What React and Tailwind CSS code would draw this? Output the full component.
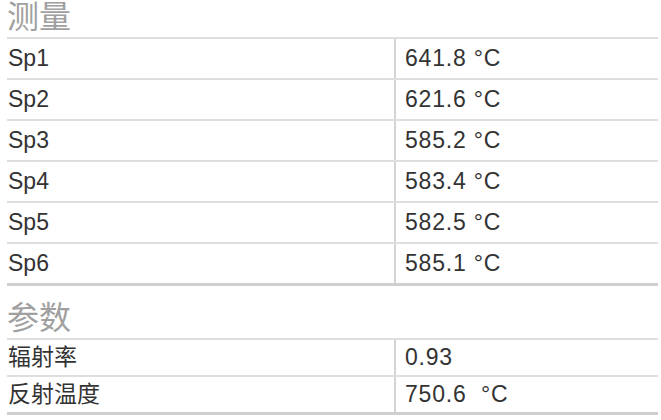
const measurements = [
  ["Sp1", "641.8 °C"],
  ["Sp2", "621.6 °C"],
  ["Sp3", "585.2 °C"],
  ["Sp4", "583.4 °C"],
  ["Sp5", "582.5 °C"],
  ["Sp6", "585.1 °C"],
]

const params = [
  ["辐射率", "0.93"],
  ["反射温度", "750.6\u00a0 °C"],
]

function Section({ title, rows, rowHeight }) {
  return (
    <div>
      <div className="h-[37px] text-[32px] leading-[35px] text-[#a0a0a0]">{title}</div>
      <div className="border-b-[3px] border-[#cfcfcf]">
        {rows.map(([label, value]) => (
          <div key={label} className={`flex border-t-2 border-[#dedede] ${rowHeight}`}>
            <div className="flex w-[389px] items-center border-r-2 border-[#d4d4d4] pl-px">{label}</div>
            <div className="flex flex-1 items-center pl-[9px] tracking-[0.8px]">{value}</div>
          </div>
        ))}
      </div>
    </div>
  )
}

export default function App() {
  return (
    <div
      className="h-[420px] w-[661px] overflow-hidden bg-white pl-[7px] pr-[3px] text-[23px] text-[#333333]"
      style={{ fontFamily: '"Liberation Sans", "Noto Sans CJK SC", sans-serif' }}
    >
      <Section title="测量" rows={measurements} rowHeight="h-[41px]" />
      <div className="mt-[15px]">
        <Section title="参数" rows={params} rowHeight="h-[37px]" />
      </div>
    </div>
  )
}
